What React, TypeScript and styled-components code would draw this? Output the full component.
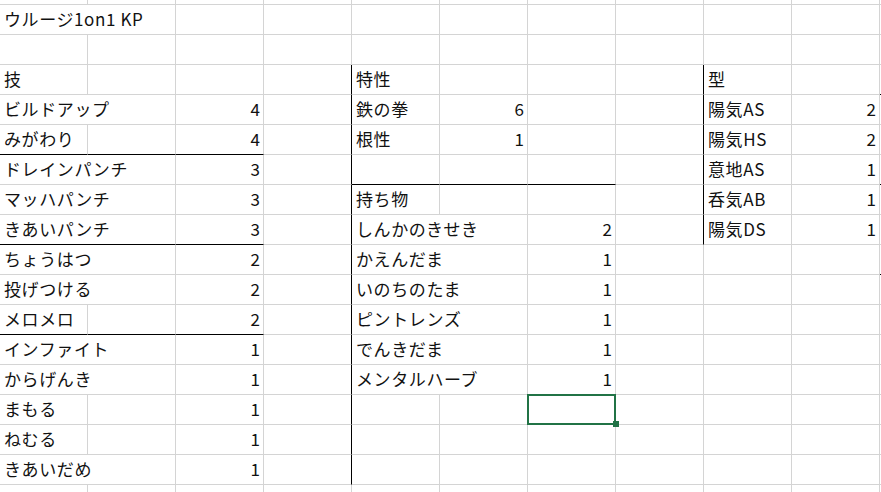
import styled, { createGlobalStyle, css } from 'styled-components';

const GlobalStyle = createGlobalStyle`
  html, body {
    margin: 0;
    padding: 0;
    background: #fff;
  }
  body {
    font-family: 'Noto Sans CJK JP', 'Noto Sans', sans-serif;
    color: #000;
  }
`;

type CellData = { text: string; num?: boolean; span?: number };

const COLS = 11;
const ROWS = 18;
const SELECTED = { row: 14, col: 6 };

const t = (text: string, span = 1): CellData => ({ text, span });
const n = (text: string): CellData => ({ text, num: true });

const sheet: Record<number, Record<number, CellData>> = {
  1: { 0: t('ウルージ1on1 KP', 2) },
  3: { 0: t('技'), 4: t('特性'), 8: t('型') },
  4: { 0: t('ビルドアップ', 2), 2: n('4'), 4: t('鉄の拳'), 5: n('6'), 8: t('陽気AS'), 9: n('2') },
  5: { 0: t('みがわり'), 2: n('4'), 4: t('根性'), 5: n('1'), 8: t('陽気HS'), 9: n('2') },
  6: { 0: t('ドレインパンチ', 2), 2: n('3'), 8: t('意地AS'), 9: n('1') },
  7: { 0: t('マッハパンチ', 2), 2: n('3'), 4: t('持ち物'), 8: t('呑気AB'), 9: n('1') },
  8: { 0: t('きあいパンチ', 2), 2: n('3'), 4: t('しんかのきせき', 2), 6: n('2'), 8: t('陽気DS'), 9: n('1') },
  9: { 0: t('ちょうはつ', 2), 2: n('2'), 4: t('かえんだま', 2), 6: n('1') },
  10: { 0: t('投げつける', 2), 2: n('2'), 4: t('いのちのたま', 2), 6: n('1') },
  11: { 0: t('メロメロ'), 2: n('2'), 4: t('ピントレンズ', 2), 6: n('1') },
  12: { 0: t('インファイト', 2), 2: n('1'), 4: t('でんきだま', 2), 6: n('1') },
  13: { 0: t('からげんき', 2), 2: n('1'), 4: t('メンタルハーブ', 2), 6: n('1') },
  14: { 0: t('まもる'), 2: n('1') },
  15: { 0: t('ねむる'), 2: n('1') },
  16: { 0: t('きあいだめ', 2), 2: n('1') },
};

// black borders drawn over the gridlines
const blackBottom = (row: number, col: number) =>
  ([5, 8, 11].includes(row) && col <= 2) ||
  (row === 6 && col >= 4 && col <= 6) ||
  ([3, 6, 9].includes(row) && col === 10);

const blackRight = (row: number, col: number) =>
  (col === 3 && row >= 3 && row <= 16) || (col === 7 && row >= 3 && row <= 8);

const App = () => {
  const cells = [];
  for (let r = 0; r < ROWS; r++) {
    const row = sheet[r] || {};
    for (let c = 0; c < COLS; c++) {
      const d = row[c];
      const span = d?.span ?? 1;
      cells.push(
        <Cell
          key={`${r}-${c}`}
          $span={span}
          $num={d?.num}
          $bottom={blackBottom(r, c)}
          $right={blackRight(r, c + span - 1)}
          $selected={r === SELECTED.row && c === SELECTED.col}
        >
          {d && <Value $num={d.num}>{d.text}</Value>}
        </Cell>
      );
      c += span - 1;
    }
  }

  return (
    <>
      <GlobalStyle />
      <Sheet>
        <Grid>{cells}</Grid>
      </Sheet>
    </>
  );
};

export default App;

const Sheet = styled.div`
  width: 881px;
  height: 492px;
  overflow: hidden;
  background: #fff;
`;

const Grid = styled.div`
  display: grid;
  grid-template-columns: repeat(${COLS}, 88px);
  grid-template-rows: 5px repeat(${ROWS - 1}, 30px);
`;

const Cell = styled.div<{
  $span: number;
  $num?: boolean;
  $bottom: boolean;
  $right: boolean;
  $selected: boolean;
}>`
  grid-column: span ${(p) => p.$span};
  box-sizing: border-box;
  display: flex;
  align-items: flex-end;
  justify-content: ${(p) => (p.$num ? 'flex-end' : 'flex-start')};
  border-right: 1px solid ${(p) => (p.$right ? '#000' : '#d4d4d4')};
  border-bottom: 1px solid ${(p) => (p.$bottom ? '#000' : '#d4d4d4')};
  min-width: 0;
  min-height: 0;

  ${(p) =>
    p.$selected &&
    css`
      position: relative;
      &::after {
        content: '';
        position: absolute;
        top: -1px;
        left: -1px;
        right: -1px;
        bottom: -1px;
        border: 2px solid #217346;
      }
      &::before {
        content: '';
        position: absolute;
        right: -4px;
        bottom: -3px;
        width: 6px;
        height: 6px;
        background: #217346;
        z-index: 2;
      }
    `}
`;

const Value = styled.span<{ $num?: boolean }>`
  padding: 0 3px 7px 4px;
  font-size: 17px;
  line-height: 17px;
  letter-spacing: ${(p) => (p.$num ? '0' : '0.6px')};
  white-space: nowrap;
  color: #111;
`;
